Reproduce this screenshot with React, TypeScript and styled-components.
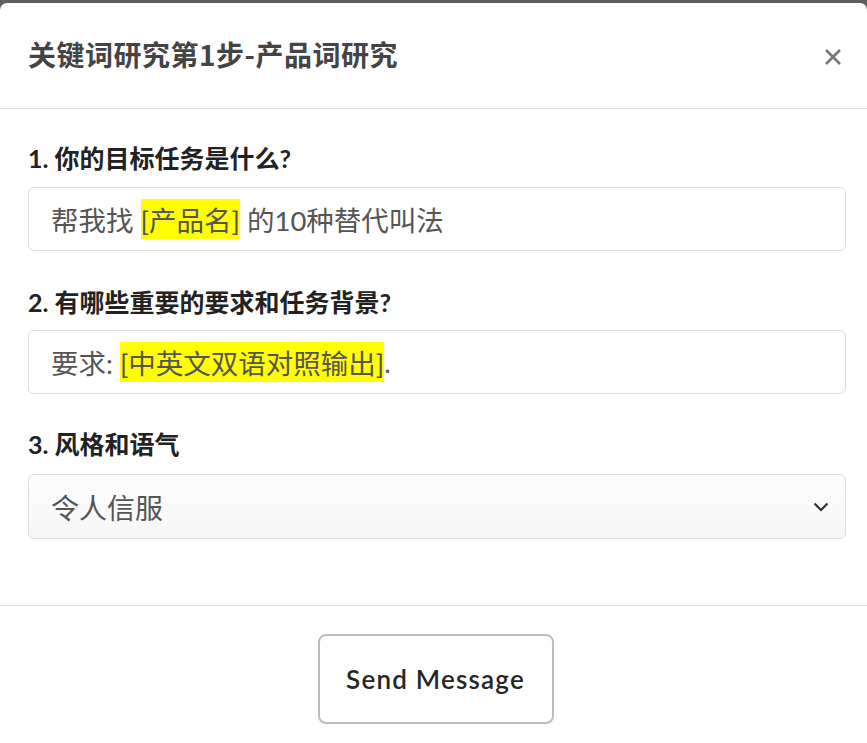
import styled, { createGlobalStyle } from "styled-components";

const GlobalStyle = createGlobalStyle`
  html, body {
    margin: 0;
    padding: 0;
    background: #5f5f5f;
  }
  body {
    font-family: Lato, "Noto Sans CJK SC", sans-serif;
  }
`;

const Modal = styled.div`
  margin-top: 3px;
  background: #fff;
  border-radius: 7px 7px 0 0;
  min-height: 740px;
  display: flex;
  flex-direction: column;
`;

const Header = styled.div`
  display: flex;
  align-items: center;
  justify-content: space-between;
  height: 106px;
  padding: 0 24px 4px 28px;
  box-sizing: border-box;
  border-bottom: 1px solid #e4e4e4;
`;

const Title = styled.h2`
  margin: 0;
  font-family: "Noto Sans CJK SC", sans-serif;
  font-size: 28px;
  font-weight: 700;
  color: #444;
  letter-spacing: 0.5px;
`;

const CloseButton = styled.button`
  border: none;
  background: none;
  padding: 0;
  margin-top: 6px;
  width: 20px;
  height: 20px;
  display: flex;
  align-items: center;
  justify-content: center;
  cursor: pointer;
`;

const Body = styled.div`
  padding: 34px 21px 66px 28px;
  border-bottom: 1px solid #e4e4e4;
`;

const Field = styled.div<{ $gap: number }>`
  margin-top: ${(p) => p.$gap}px;
`;

const Label = styled.div<{ $below: number }>`
  font-family: Lato, "Noto Sans CJK SC", sans-serif;
  font-size: 25px;
  font-weight: 700;
  line-height: 30px;
  color: #222;
  margin-bottom: ${(p) => p.$below}px;
`;

const TextBox = styled.div`
  height: 64px;
  box-sizing: border-box;
  border: 1px solid #dcdcdc;
  border-radius: 6px;
  padding: 0 22px;
  display: flex;
  align-items: center;
  font-family: Lato, "Noto Sans CJK SC", sans-serif;
  font-size: 27.5px;
  color: #555;
  white-space: pre;
`;

const Mark = styled.span`
  background: #ffff00;
  color: #555;
`;

const SelectBox = styled.div`
  height: 65px;
  box-sizing: border-box;
  border: 1px solid #dcdcdc;
  border-radius: 6px;
  padding: 0 16px 0 22px;
  display: flex;
  align-items: center;
  justify-content: space-between;
  background: linear-gradient(#fdfdfd, #f6f6f6);
  font-family: "Noto Sans CJK SC", sans-serif;
  font-size: 28px;
  color: #555;
`;

const Footer = styled.div`
  display: flex;
  justify-content: center;
  padding: 28px 0 20px 4px;
`;

const SendButton = styled.button`
  width: 236px;
  height: 90px;
  background: #fff;
  border: 2px solid #bdbdbd;
  border-radius: 8px;
  font-family: Lato, sans-serif;
  font-size: 26px;
  font-weight: 600;
  color: #262626;
  letter-spacing: 1.2px;
  cursor: pointer;
`;

function CloseIcon() {
  return (
    <svg width="18" height="18" viewBox="0 0 18 18">
      <path d="M2 2 L16 16 M16 2 L2 16" stroke="#777" strokeWidth="2.6" strokeLinecap="butt" />
    </svg>
  );
}

function Chevron() {
  return (
    <svg width="16" height="10" viewBox="0 0 16 10">
      <path d="M1.5 1.5 L8 8 L14.5 1.5" stroke="#333" strokeWidth="2.2" fill="none" />
    </svg>
  );
}

export default function App() {
  return (
    <>
      <GlobalStyle />
      <Modal>
        <Header>
          <Title>关键词研究第1步-产品词研究</Title>
          <CloseButton title="Close">
            <CloseIcon />
          </CloseButton>
        </Header>
        <Body>
          <Field $gap={0}>
            <Label $below={14}>1. 你的目标任务是什么?</Label>
            <TextBox>
              帮我找 <Mark>[产品名]</Mark> 的10种替代叫法
            </TextBox>
          </Field>
          <Field $gap={36}>
            <Label $below={13}>2. 有哪些重要的要求和任务背景?</Label>
            <TextBox>
              要求: <Mark>[中英文双语对照输出]</Mark>.
            </TextBox>
          </Field>
          <Field $gap={35}>
            <Label $below={15}>3. 风格和语气</Label>
            <SelectBox>
              <span>令人信服</span>
              <Chevron />
            </SelectBox>
          </Field>
        </Body>
        <Footer>
          <SendButton>Send Message</SendButton>
        </Footer>
      </Modal>
    </>
  );
}
